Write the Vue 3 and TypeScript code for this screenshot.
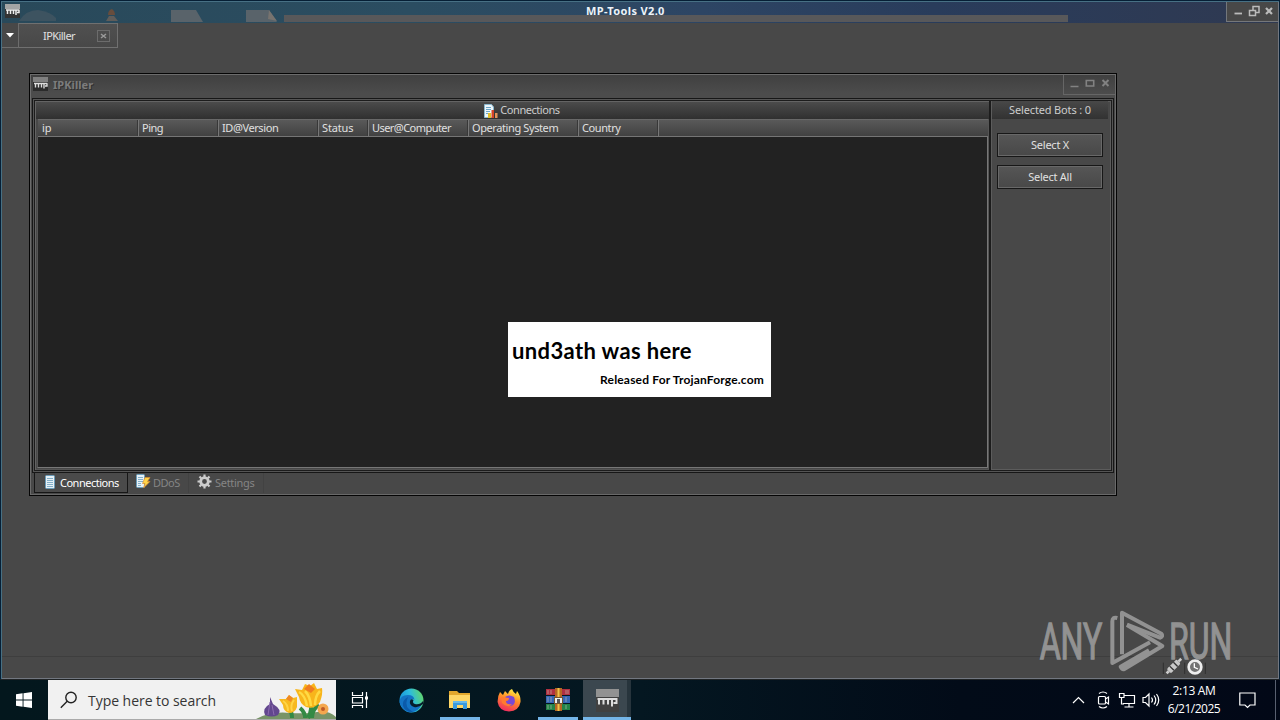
<script setup lang="ts">
interface Column { label: string; width: number; spacing: number }

const columns: Column[] = [
  { label: 'ip', width: 100, spacing: 0 },
  { label: 'Ping', width: 80, spacing: -0.5 },
  { label: 'ID@Version', width: 100, spacing: -0.4 },
  { label: 'Status', width: 50, spacing: -0.15 },
  { label: 'User@Computer', width: 100, spacing: -0.55 },
  { label: 'Operating System', width: 110, spacing: -0.4 },
  { label: 'Country', width: 80, spacing: -0.4 },
]
const actions: string[] = ['Select X', 'Select All']
</script>

<template>
  <div class="screen">
    <div class="app">
      <header class="titlebar">
        <svg class="ghosts" width="1276" height="20" viewBox="0 0 1276 20">
          <path d="M17 19Q24 8 36 8Q49 10 54 16V19Z" fill="#3d5360" />
          <path d="M104 19L107 14H112L116 19Z" fill="#605d5a" />
          <path d="M106 13Q106 8 110 7Q113 9 113 13Z" fill="#674d3d" />
          <path d="M169 8H194L201 20H169Z" fill="#59636a" />
          <path d="M244 8H267L275 20H244Z" fill="#59636a" />
          <path d="M267 8L266 17L275 19Z" fill="#77736f" />
          <rect x="282" y="13" width="784" height="7" fill="#58585a" />
        </svg>
        <svg class="mp" width="16" height="16" viewBox="0 0 16 16">
          <rect y="1" width="15" height="14" fill="#333" /><rect y="1" width="15" height="5" fill="#a5a5a5" />
          <path d="M1 7H14.500M2.500 11V7M5.500 7V11M8.500 7V11M11 7V12M14 7V9.500H12" fill="none" stroke="#eee" stroke-width="1.5" />
        </svg>
        <span class="apptitle">MP-Tools V2.0</span>
        <div class="caption">
          <svg width="51" height="20" viewBox="0 0 51 20" fill="none" stroke="#bbb">
            <path d="M7.500 11.5H15" stroke-width="1.8" />
            <path d="M22.5 8.5H28.5V13.5H22.5ZM26 8V4.5H32V10.5H29" stroke-width="1.5" />
            <path d="M39 6L45 12M45 6L39 12" stroke-width="2.200" />
          </svg>
        </div>
      </header>
      <div class="tabs">
        <span class="drop"><svg width="8" height="5" viewBox="0 0 8 5"><path d="M0 0H8L4 4.5Z" fill="#fff" /></svg></span>
        <span class="doc"><span class="docname">IPKiller</span>
          <svg width="13" height="12" viewBox="0 0 13 12"><rect x=".5" y=".5" width="12" height="11" fill="none" stroke="#6c6c6c" /><path d="M4 4L9 8M9 4L4 8" stroke="#9a9a9a" stroke-width="1.500" /></svg>
        </span>
      </div>
      <div class="statusbar"></div>
    </div>

    <section class="window">
      <div class="wtitle">
        <svg width="15" height="15" viewBox="0 0 15 15">
          <rect width="15" height="14" fill="#2b2b2b" /><rect width="15" height="5" fill="#808080" />
          <path d="M1 6.500H14.500M2.500 10.500V6.500M5.500 6.500V10.500M8.500 6.500V10.500M11 6.500V11.500M14 6.500V9H12" fill="none" stroke="#ddd" stroke-width="1.4" />
        </svg>
        <span class="wname">IPKiller</span>
        <div class="wcaption">
          <svg width="51" height="20" viewBox="0 0 51 20" fill="none" stroke="#828282">
            <path d="M6.500 11.500H14.500" stroke-width="1.5" /><path d="M22.300 5.500H29.700V11H22.300Z" stroke-width="1.6" />
            <path d="M38.500 5L44.500 11M44.500 5L38.500 11" stroke-width="2" />
          </svg>
        </div>
      </div>
      <div class="frame">
        <div class="list">
          <div class="group">
            <svg width="14" height="14" viewBox="0 0 14 14">
              <path d="M.5.5H7.5L9.5 3V13.5H.5Z" fill="#eef6fa" stroke="#8cbad0" /><path d="M2 3.5H7M2 5.5H7M2 7.5H6M2 9.5H5" stroke="#6ba6c8" />
              <rect x="4" y="9" width="3" height="5" fill="#e2bf2c" /><rect x="7.500" y="6" width="2.500" height="8" fill="#d34427" /><rect x="11" y="9" width="2.500" height="5" fill="#e1955b" />
            </svg>
            <span class="gname">Connections</span>
          </div>
          <div class="cols">
            <span v-for="c in columns" :key="c.label" class="col" :style="{ width: c.width + 'px', letterSpacing: c.spacing + 'px' }">{{ c.label }}</span>
          </div>
          <div class="rows"></div>
        </div>
        <aside class="side">
          <div class="bots">Selected Bots : 0</div>
          <button v-for="a in actions" :key="a" class="btn">{{ a }}</button>
        </aside>
      </div>
      <nav class="pages">
        <span class="page active">
          <svg width="10" height="14" viewBox="0 0 10 14"><rect x=".5" y=".5" width="9" height="13" rx="1" fill="#e7f1f6" stroke="#6a9cba" /><path d="M2 3.5H8M2 5.5H8M2 7.5H8M2 9.5H8M2 11.5H8" stroke="#83afc9" /></svg>
          <span class="t1">Connections</span>
        </span>
        <span class="page p2">
          <svg width="15" height="15" viewBox="0 0 15 15"><rect x=".5" y=".5" width="8" height="13" rx="1" fill="#e7f1f6" stroke="#6a9cba" /><path d="M2 3.5H7M2 5.5H7M2 7.5H7M2 9.5H5M2 11.5H5" stroke="#83afc9" /><path d="M9 3.5H14L11.5 7.5H14L7.5 14L9 9.5H6.5Z" fill="#ffd349" stroke="#d98a2b" stroke-width=".7" /></svg>
          <span class="t2">DDoS</span>
        </span>
        <span class="page p3">
          <svg width="15" height="15" viewBox="0 0 15 15"><g fill="none" stroke="#ccc"><circle cx="7.5" cy="7.5" r="3.8" stroke-width="2.8" /><path d="M7.5 .5V3M7.5 12V14.5M.5 7.5H3M12 7.5H14.5M2.5 2.5L4.2 4.2M10.8 10.8L12.5 12.5M2.5 12.5L4.2 10.8M10.8 4.2L12.5 2.5" stroke-width="2.2" /></g></svg>
          <span class="t3">Settings</span>
        </span>
      </nav>
    </section>

    <div class="splash">
      <strong class="who">und3ath was here</strong>
      <strong class="rel">Released For TrojanForge.com</strong>
    </div>

    <svg class="mark" width="260" height="80" viewBox="0 0 780 240">
      <g fill="#929292" stroke="#929292" stroke-width="4" font-family="Roboto, 'Liberation Sans', sans-serif" font-size="151">
        <text x="59" y="177" textLength="188" lengthAdjust="spacingAndGlyphs">ANY</text>
        <text x="447" y="177" textLength="190" lengthAdjust="spacingAndGlyphs">RUN</text>
      </g>
      <g fill="none" stroke="#929292" stroke-width="12" stroke-linejoin="round">
        <path d="M292 54Q277 50 277 64V189L390 127" />
        <path d="M306 163V38L424 101Q431 108 420 113L321 74" />
        <path d="M321 75L427 138L313 207Q306 209 302 200L387 151" />
      </g>
      <path d="M430 188V222M494 188V222M556 188V222" stroke="#303030" stroke-width="3" />
      <g transform="rotate(-45 461 199)"><rect x="440" y="190" width="42" height="18" rx="5" fill="#c8c8c8" /><path d="M431 199H440M482 199H493" stroke="#ccc" stroke-width="8" /><path d="M453 190V208M469 190V208" stroke="#333" stroke-width="4" /></g>
      <circle cx="525" cy="201" r="19" fill="#737373" stroke="#eee" stroke-width="8" /><path d="M523 190V202L534 207" fill="none" stroke="#fff" stroke-width="4" />
    </svg>

    <footer class="taskbar">
      <div class="start"><svg width="16" height="16" viewBox="0 0 16 16" fill="#fff"><path d="M0 2.2L6.6 1.3V7.5H0ZM7.5 1.2L16 0V7.5H7.5ZM0 8.5H6.6V14.7L0 13.8ZM7.5 8.5H16V16L7.5 14.8Z" /></svg></div>
      <div class="search">
        <svg class="lens" width="18" height="18" viewBox="0 0 18 18" fill="none" stroke="#222" stroke-width="1.4"><circle cx="11" cy="6.5" r="5.2" /><path d="M7.2 10.3L.8 16.7" /></svg>
        <span class="hint">Type here to search</span>
        <svg class="flowers" width="80" height="39" viewBox="0 0 80 39">
          <path d="M0 39Q15 31 34 33Q52 34 61 32Q72 30 80 37V39Z" fill="#779467" />
          <path d="M54 22Q57 29 52 38M33 29Q36 32 36 38M44 28Q49 32 49 38M63 25Q56 29 56 38" fill="none" stroke="#338a45" stroke-width="4" />
          <path d="M14 17L17 24Q27 30 22 35Q16 38 9 35Q6 28 14 24Z" fill="#62478e" /><path d="M14 22L12 35M16 25L18 35" stroke="#8c6ab0" />
          <path d="M23 19L30 19L33 15L37 18L41 17L41 27Q39 33 33 33Q27 31 27 25Z" fill="#f7b91f" /><path d="M27 21Q32 24 32 31M38 20Q34 25 36 31" fill="none" stroke="#ffd447" stroke-width="2" /><path d="M30 19L33 15L37 18L35 22Z" fill="#ef8924" />
          <path d="M39 9L46 10L49 4L54 6L58 3L61 9L66 8Q67 14 64 22Q58 30 50 27Q44 24 43 17Z" fill="#f8b51b" /><path d="M43 12Q49 15 51 26M49 11Q54 16 55 26M64 11Q59 16 59 25" fill="none" stroke="#ffda43" stroke-width="2.500" /><path d="M48 9L53 4L59 9L55 13Z" fill="#ef7c20" />
          <circle cx="67" cy="29" r="5.500" fill="#f4a74e" /><circle cx="67" cy="29" r="2" fill="#bd5926" />
        </svg>
      </div>
      <div class="task view"><svg width="18" height="18" viewBox="0 0 18 18" fill="none" stroke="#fff" stroke-width="1.2"><path d="M1.5 1V4.500H11.5V1M1.5 17V14.500H11.5V17M1.5 6.5H11.5V12H1.5ZM15.5 1V17" /><path d="M14 7H17" stroke-width="3" /></svg></div>
      <div class="task edge"><svg width="25" height="25" viewBox="0 0 25 25">
        <defs><linearGradient id="eg" x1="0" y1=".6" x2="1" y2=".3"><stop stop-color="#168fd8" /><stop offset=".5" stop-color="#2bbbe0" /><stop offset="1" stop-color="#62d66a" /></linearGradient></defs>
        <circle cx="12.5" cy="12.5" r="12" fill="url(#eg)" /><path d="M.6 14Q1 7 9 7Q15 7 15.5 12Q14 10 12 12Q10 17 17 18Q21 18 23 16Q18 26 9 24Q2 21 .6 14Z" fill="#1473c4" /><path d="M11 13Q10 17 15 19Q20 20 24 16Q25 14 24 13Q21 17 16 16Q13 15 14.5 12Q12 10 11 13Z" fill="#071c2b" /><path d="M8 12Q5 19 14 24Q6 24 4 18Q3 12 9 9" fill="#0b5aaa" />
      </svg></div>
      <div class="task open"><svg width="23" height="20" viewBox="0 0 23 20"><path d="M1 1H9L11 3H22V18H1Z" fill="#e3a82d" /><path d="M1 5H22V18H1Z" fill="#ffd766" /><path d="M5 11H19V19H15V15H9V19H5Z" fill="#3b9add" /><path d="M5 11H19V13H5Z" fill="#69b9e8" /></svg></div>
      <div class="task"><svg width="24" height="24" viewBox="0 0 24 24">
        <defs><linearGradient id="fg" x1=".7" y1="0" x2=".3" y2="1"><stop stop-color="#fff044" /><stop offset=".45" stop-color="#ff8b28" /><stop offset="1" stop-color="#f12763" /></linearGradient></defs>
        <path d="M3 4L6 7L8 3L11 6Q12 2 15 1Q16 4 19 6L20 3Q24 8 23.5 14Q22 23 12 23.5Q2 23 .6 14Q.5 8 3 4Z" fill="url(#fg)" /><path d="M8 9Q12 6 17 9Q20 17 13 18Q7 18 7 13L11 12Z" fill="#7948d4" /><path d="M4 9L12 10Q12 13 9 13Q9 17 15 16Q11 21 5 15Z" fill="#ff7a30" />
      </svg></div>
      <div class="task open"><svg width="25" height="23" viewBox="0 0 25 23">
        <path d="M0 1H24V7H0Z" fill="#af3040" /><path d="M0 8H24V15H0Z" fill="#3566b4" /><path d="M0 16H24V22H0Z" fill="#238348" /><path d="M2 2V6M5 2V6M20 2V6M22 2V6M2 9V14M5 9V14M20 9V14M2 17V21M5 17V21M20 17V21" stroke="#c7c6b7" stroke-opacity=".6" />
        <rect x="9" width="7" height="23" fill="#b56622" /><path d="M12.5 0V23" stroke="#efc349" stroke-width="2" /><rect x="8.500" y="9.500" width="8" height="6" fill="#eee" stroke="#72552e" /><rect x="11" y="11" width="3" height="4" fill="#555" />
      </svg></div>
      <div class="task open selected"><svg width="23" height="24" viewBox="0 0 23 24"><rect width="23" height="23" fill="#414141" /><rect width="23" height="8" fill="#929292" /><path d="M1.500 10H21.500M3 15.500V10M7.500 10V15.500M12 10V15.500M16 10V17.500M20.500 10V14H17.500" fill="none" stroke="#ddd" stroke-width="2" /></svg></div>
      <div class="tray">
        <svg width="130" height="24" viewBox="0 0 130 24" fill="none" stroke="#fff" stroke-width="1.2">
          <path d="M4 15L9.5 9.5L15 15" />
          <rect x="29.500" y="8.5" width="7" height="7.500" rx="1" /><path d="M36.500 11L39.500 9V16L36.500 14M30 5.500Q34 2.5 38 5.500M30 18.500Q34 21.500 38 18.500" />
          <path d="M55.500 7.5H65.5V15.5H54M60 16V19M55.5 19H64.5M50.500 5.5H55V9.5H50.500ZM52.500 10V16H55" />
          <path d="M74 9.5H76.5L80 6V18L76.5 14.5H74ZM82.500 9.5Q84.500 12 82.500 14.5M85 7.5Q88.500 12 85 16.5M87.500 6Q92 12 87.500 18" />
        </svg>
        <div class="clock"><span class="time">2:13 AM</span><span class="date">6/21/2025</span></div>
        <svg class="note" width="17" height="17" viewBox="0 0 17 17" fill="none" stroke="#fff" stroke-width="1.2"><path d="M.8 1H16V13H11L8.500 15.500L6 13H.8Z" /></svg>
        <i class="peek"></i>
      </div>
    </footer>
  </div>
</template>

<style>
html, body { margin: 0; overflow: hidden; background: #484848; }
</style>
<style scoped>
* { box-sizing: border-box; }
svg { display: block; flex: none; }
.screen { position: relative; width: 1280px; height: 720px; display: flex; flex-direction: column; overflow: hidden; font: 11px/15px 'Noto Sans', 'Open Sans', sans-serif; color: #e0e0e0; white-space: nowrap; }
.app { height: 680px; display: flex; flex-direction: column; background: #484848; border: 1px solid #061f35; border-bottom-color: #202426; box-shadow: inset 1px 1px #477084, inset -1px -1px #727780; }
.titlebar { position: relative; height: 21px; margin: 1px 1px 0; display: flex; align-items: flex-start; background: linear-gradient(90deg, #29495a 0, #2b4d61 32%, #2d4564 55%, #293c5b 73%, #2f3951 100%); }
.ghosts { position: absolute; left: 0; top: 0; }
.mp { margin: 1px 0 0 3px; position: relative; }
.apptitle { position: relative; margin-left: 565px; margin-top: 1px; font-weight: 700; letter-spacing: .36px; color: #eef3f7; }
.caption { position: relative; margin-left: auto; width: 52px; height: 20px; background: #484848; border-left: 1px solid #73777c; border-bottom: 1px solid #75777a; }
.tabs { height: 25px; margin-left: 1px; display: flex; }
.drop { width: 17px; display: flex; align-items: center; justify-content: center; border: 1px solid #6c6c6c; border-left: 0; border-top: 0; }
.doc { width: 99px; padding: 0 7px 0 24px; display: flex; align-items: center; justify-content: space-between; border: 1px solid #707070; border-left: 0; background: linear-gradient(#505050, #484848); }
.docname { letter-spacing: -.55px; }
.statusbar { margin: auto 1px 1px; height: 22px; border-top: 1px solid #3e3e3e; }
.window { position: absolute; left: 29px; top: 73px; width: 1088px; height: 423px; display: flex; flex-direction: column; border: 1px solid #050505; background: #484848; box-shadow: inset 1px 1px #6c6c6c, inset -1px -1px #696969; }
.wtitle { height: 23px; display: flex; align-items: flex-start; background: linear-gradient(#404040, #4c4c4c 80%); margin: 1px 1px 0; padding-left: 2px; }
.wtitle > svg { margin-top: 2px; }
.wname { margin: 2px 0 0 5px; font-weight: 700; letter-spacing: .05px; color: #7c7c7c; text-shadow: 1px 1px #303030; }
.wcaption { margin-left: auto; width: 52px; height: 20px; border-left: 1px solid #666; border-bottom: 1px solid #666; }
.wcaption svg { margin: 0; }
.frame { height: 375px; margin: 0 2px; display: flex; padding: 1px; border: 1px solid #171717; outline: 1px solid #555; outline-offset: -2px; }
.list { width: 957px; padding-left: 1px; border: 1px solid #1c1c1c; border-right-width: 2px; box-shadow: inset 1px 1px #646464, inset -1px -1px #555; display: flex; flex-direction: column; }
.group { height: 17px; display: flex; align-items: center; justify-content: center; gap: 2px; margin-top: 1px; padding-left: 19px; background: linear-gradient(#4b4b4b, #303030); color: #ccc; letter-spacing: -.45px; }
.gname { margin-top: -2px; }
.cols { height: 18px; margin: 0 1px 0 2px; display: flex; border-top: 1px solid #686868; border-bottom: 1px solid #757575; background: linear-gradient(#595959, #414141); }
.col { padding-left: 4px; line-height: 16px; border-right: 1px solid #383838; box-shadow: 1px 0 #777; }
.rows { flex: 1; margin: 0 1px 2px 1px; border: 1px solid #777; border-left-color: #555; border-top: 0; background: #222; }
.side { flex: 1; display: flex; flex-direction: column; align-items: center; border: 1px solid #1c1c1c; border-left: 0; box-shadow: inset 1px 1px #5c5c5c, inset -1px -1px #5c5c5c; padding-right: 2px; }
.bots { width: 116px; height: 18px; line-height: 18px; margin-bottom: 14px; text-align: center; letter-spacing: -.15px; color: #ccc; background: linear-gradient(#484848, #323232); }
.btn { width: 106px; height: 24px; padding: 0 0 2px; margin-bottom: 8px; border: 1px solid #171717; box-shadow: inset 0 0 0 1px #686868; background: linear-gradient(#565656, #484848); color: #e0e0e0; font: inherit; letter-spacing: -.25px; }
.pages { height: 21px; display: flex; margin-left: 4px; }
.page { display: flex; align-items: center; height: 20px; }
.page span { letter-spacing: -.5px; }
.active { width: 94px; padding-left: 10px; gap: 5px; border: 1px solid #161616; border-top: 0; color: #fff; background: #4a4a4a; }
.page > svg { margin-top: -2px; }
.p2 { width: 61px; padding-left: 8px; gap: 2px; color: #858585; border-right: 1px solid #424242; }
.p3 { width: 75px; padding-left: 8px; gap: 3px; color: #858585; border-right: 1px solid #424242; }
.page .t2 { margin-top: -2px; }
.page .t3 { margin-top: -2px; letter-spacing: -.3px; }
.p2 > svg, .p3 > svg { margin-top: -4px; }
.splash { position: absolute; left: 508px; top: 322px; width: 263px; height: 75px; display: flex; flex-direction: column; background: #fff; color: #000; font-family: Lato, sans-serif; }
.who { margin: 15px 0 0 4px; font-size: 22px; line-height: 28px; letter-spacing: .37px; }
.rel { align-self: flex-end; margin: 7px 7px 0 0; font-size: 12px; line-height: 16px; letter-spacing: .17px; }
.mark { position: absolute; left: 1020px; top: 600px; }
.taskbar { height: 40px; display: flex; background: linear-gradient(90deg, #03171d, #041721 50%, #020b18 75%, #020817); font-family: 'Open Sans', sans-serif; }
.start { width: 48px; display: flex; align-items: center; justify-content: center; }
.search { width: 288px; display: flex; align-items: center; padding-left: 12px; background: #f1f1f1; border-bottom: 1px solid #aaa; color: #353535; font-size: 14px; letter-spacing: -.04px; }
.hint { padding-top: 2px; }
.lens { margin-right: 10px; }
.flowers { margin-left: auto; }
.task { width: 49px; display: flex; align-items: center; justify-content: center; }
.view { width: 48px; }
.edge { width: 54px; }
.task:nth-child(5) { width: 40px; margin-left: 2px; }
.task:nth-child(6) { width: 58px; }
.task:nth-child(7) { width: 40px; }
.open { border-bottom: 3px solid #74b5e8; padding-top: 2px; }
.task:nth-child(5) svg { margin-right: 1px; }
.selected { width: 48px; margin-left: 5px; background: #3b474f; box-shadow: -4px 0 0 inset #27343c; padding-top: 4px; }
.tray { margin-left: auto; display: flex; align-items: center; width: 211px; }
.tray > svg:first-child { width: 130px; margin-right: -37px; }
.clock { width: 64px; display: flex; flex-direction: column; align-items: center; font-size: 12px; line-height: 18px; color: #fff; }
.time { letter-spacing: -.35px; }
.date { letter-spacing: -.5px; }
.note { margin-left: 13px; }
.peek { margin-left: auto; width: 5px; height: 40px; border-left: 1px solid #596070; }
</style>
